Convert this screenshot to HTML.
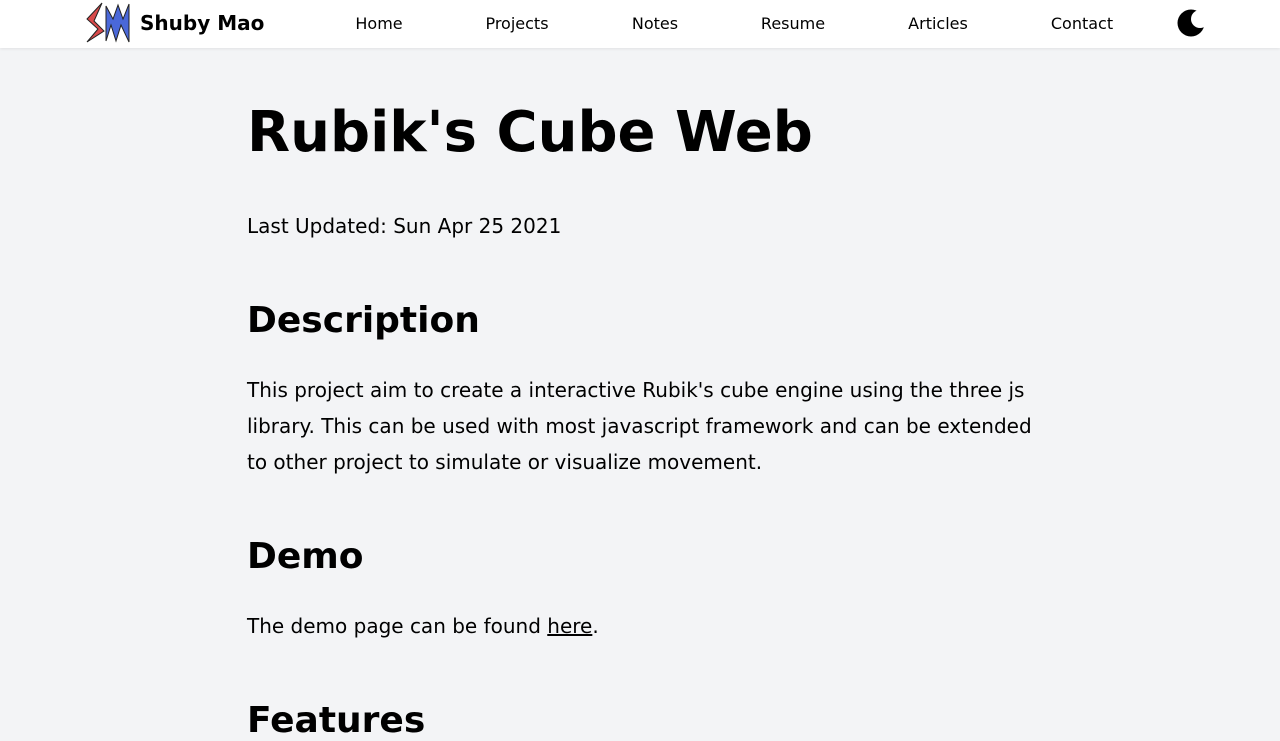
<!DOCTYPE html>
<html><head><meta charset="utf-8"><style>
*{margin:0;padding:0;box-sizing:border-box}
body{background:#f3f4f6;font-family:"DejaVu Sans","Liberation Sans",sans-serif;color:#000;width:1280px;height:720px;overflow:hidden}
header{position:absolute;top:0;left:0;width:1280px;height:48px;background:#fff;box-shadow:0 1px 3px rgba(0,0,0,.08)}
.brand{position:absolute;left:140px;top:11px;font-weight:bold;font-size:20px}
.nav a{position:absolute;top:14px;font-size:16px;color:#000;text-decoration:none;transform:translateX(-50%)}
main{position:absolute;left:247px;width:790px}
h1{position:absolute;top:100px;font-size:56px;white-space:nowrap}
h2{position:absolute;font-size:36px;white-space:nowrap}
p{position:absolute;font-size:20px;line-height:36px;width:790px}
a.u{color:#000;text-decoration:underline}
</style></head><body>
<header>
<svg style="position:absolute;left:85px;top:2px" width="46" height="42" viewBox="0 0 46 42">
<path d="M17 1 L2 17 L13 27 L2 40 L19 29 L9 19 Z" fill="#d94a4a" stroke="#222" stroke-width="1"/>
<path d="M21 4 L21 39 L26 23 L31 39 L36 23 L44 40 L44 2 L38 17 L33 3 L28 17 Z" fill="#4a68d9" stroke="#222" stroke-width="1"/>
</svg>
<div class="brand">Shuby Mao</div>
<div class="nav">
<a style="left:379px">Home</a><a style="left:517px">Projects</a><a style="left:655px">Notes</a><a style="left:793px">Resume</a><a style="left:938px">Articles</a><a style="left:1082px">Contact</a>
</div>
<svg style="position:absolute;left:1177px;top:8px" width="30" height="30" viewBox="0 0 30 30">
<defs><mask id="m"><rect width="30" height="30" fill="#fff"/><circle cx="23" cy="11" r="9" fill="#000"/></mask></defs>
<circle cx="14" cy="15" r="13.5" fill="#000" mask="url(#m)"/>
</svg>
</header>
<main>
<h1>Rubik's Cube Web</h1>
<p style="top:208px">Last Updated: Sun Apr 25 2021</p>
<h2 style="top:300px">Description</h2>
<p style="top:372px">This project aim to create a interactive Rubik's cube engine using the three js library. This can be used with most javascript framework and can be extended to other project to simulate or visualize movement.</p>
<h2 style="top:536px">Demo</h2>
<p style="top:608px">The demo page can be found <a class="u">here</a>.</p>
<h2 style="top:700px">Features</h2>
</main>
</body></html>
